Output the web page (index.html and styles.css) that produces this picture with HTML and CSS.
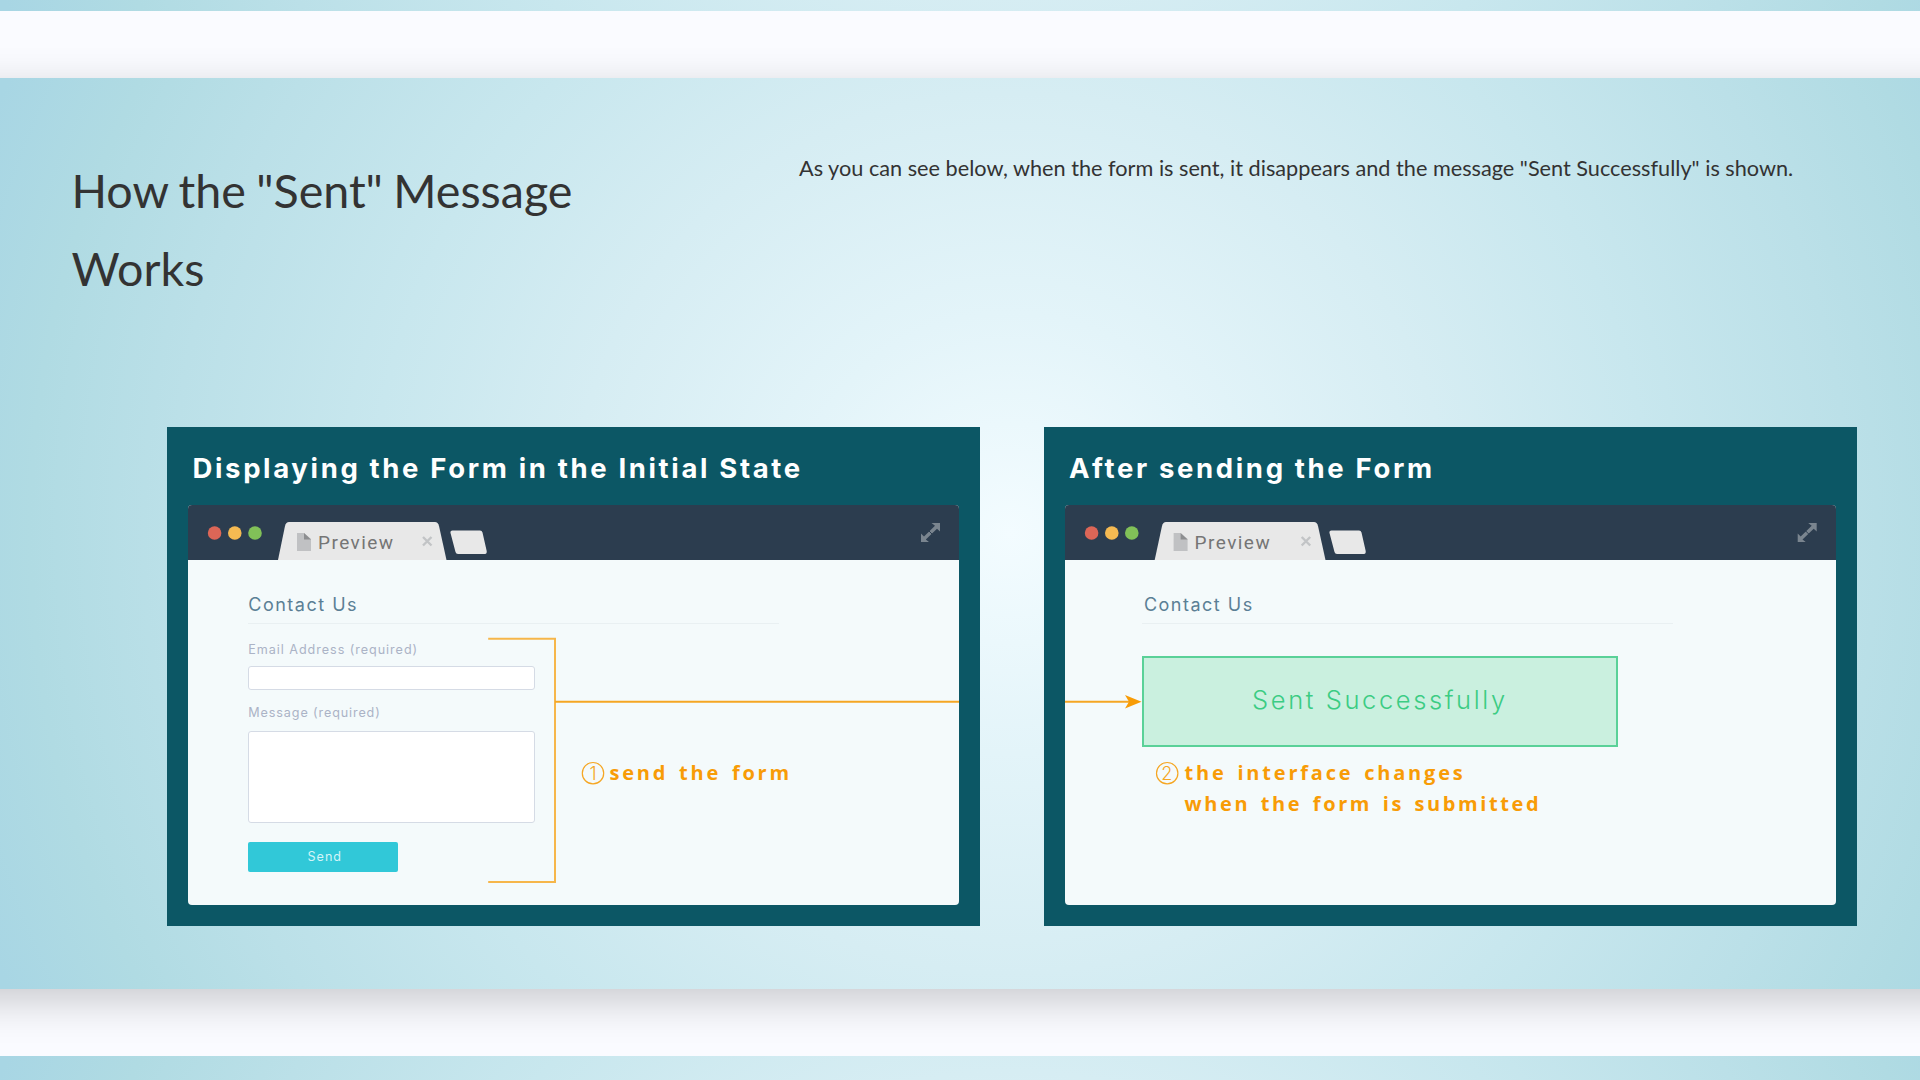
FILE: index.html
```html
<!DOCTYPE html>
<html lang="en">
<head>
<meta charset="utf-8">
<title>How the "Sent" Message Works</title>
<link rel="stylesheet" href="styles.css">
</head>
<body>
<div class="page">
  <div class="strip strip-top"></div>
  <section class="feature">
    <div class="intro">
      <h2>How the "Sent" Message<br>Works</h2>
      <p>As you can see below, when the form is sent, it disappears and the message "Sent Successfully" is shown.</p>
    </div>
    <div class="cards">
      <article class="card">
        <h3>Displaying the Form in the Initial State</h3>
        <div class="window">
          <header class="bar">
            <svg class="chrome" width="772" height="55" viewBox="0 0 772 55" aria-hidden="true">
              <circle cx="26.6" cy="28" r="6.8" fill="#dc6657"/><circle cx="46.8" cy="28" r="6.8" fill="#f5ba52"/><circle cx="67" cy="28" r="6.8" fill="#81c158"/>
              <path d="M90 55 97 21Q98 17 101 17H247Q250 17 251 21L258.500 55Z" fill="#e8e8e8"/>
              <path d="M264.500 25.500H292Q294 25.500 294.500 27.500L298.700 46Q299 49 297 49H270Q268 49 267.500 47L262.500 28Q262 25.500 264.500 25.500Z" fill="#e8e8e8"/>
              <path d="M109 28H116L123 34V46H109Z" fill="#c0c1c3"/><path d="M116 28 123 34.500H116Z" fill="#8d8e90"/>
              <path d="M235 32 243.500 40.500M243.500 32 235 40.500" stroke="#c2c4c6" stroke-width="2.400"/>
              <path d="M743.500 18H752V26.500L749 23.700 737.800 34.500 741 37H733V28.500L736 31.500 747 20.700Z" fill="#7a858f"/><path d="M740.500 25.500 744.500 29.500" stroke="#2c3d4f" stroke-width="1"/>
            </svg>
            <span class="tab-name">Preview</span>
          </header>
          <div class="body">
            <h4>Contact Us</h4>
            <div class="label">Email Address (required)</div>
            <div class="input"></div>
            <div class="label second">Message (required)</div>
            <div class="textarea"></div>
            <div class="send">Send</div>
            <svg class="wires" width="772" height="345" viewBox="0 0 772 345" aria-hidden="true">
              <path d="M300.200 78.800H367V322H300.200" fill="none" stroke="#f6b64a" stroke-width="2"/>
              <path d="M367 141.700H772" stroke="#f5a623" stroke-width="2"/>
              <circle cx="405" cy="213.200" r="10.700" fill="none" stroke="#f5a623" stroke-width="1.200"/>
            </svg>
            <div class="number n1">1</div>
            <div class="note note1">send the form</div>
          </div>
        </div>
      </article>
      <article class="card right">
        <h3>After sending the Form</h3>
        <div class="window">
          <header class="bar">
            <svg class="chrome" width="772" height="55" viewBox="0 0 772 55" aria-hidden="true">
              <circle cx="26.600" cy="28" r="6.800" fill="#dc6657"/><circle cx="46.800" cy="28" r="6.800" fill="#f5ba52"/><circle cx="66.800" cy="28" r="6.800" fill="#81c158"/>
              <path d="M89.700 55 97 21Q98 17 101 17H249Q252 17 253 21L260.500 55Z" fill="#e8e8e8"/>
              <path d="M266.500 25.500H294Q296 25.500 296.500 27.500L300.700 46Q301 49 299 49H272Q270 49 269.500 47L264.500 28Q264 25.500 266.500 25.500Z" fill="#e8e8e8"/>
              <path d="M108.600 28H115.600L122.600 34V46H108.600Z" fill="#c0c1c3"/><path d="M115.600 28 122.600 34.500H115.600Z" fill="#8d8e90"/>
              <path d="M236.700 32 245.200 40.500M245.200 32 236.700 40.500" stroke="#c2c4c6" stroke-width="2.400"/>
              <path d="M743.200 18H751.700V26.500L748.700 23.700 737.500 34.500 740.700 37H732.700V28.500L735.700 31.500 746.700 20.700Z" fill="#7a858f"/><path d="M740.200 25.500 744.200 29.500" stroke="#2c3d4f" stroke-width="1"/>
            </svg>
            <span class="tab-name">Preview</span>
          </header>
          <div class="body">
            <h4>Contact Us</h4>
            <div class="success">Sent Successfully</div>
            <svg class="wires" width="772" height="345" viewBox="0 0 772 345" aria-hidden="true">
              <path d="M0 141.700H64" stroke="#f5a623" stroke-width="2"/>
              <path d="M60 135 76.500 141.700 60 148.500 64 141.700Z" fill="#f89c06"/>
              <circle cx="102.200" cy="213.200" r="10.700" fill="none" stroke="#f5a623" stroke-width="1.200"/>
            </svg>
            <div class="number n2">2</div>
            <div class="note note2">the interface changes<br><span class="second-line">when the form is submitted</span></div>
          </div>
        </div>
      </article>
    </div>
  </section>
  <div class="strip strip-bottom"></div>
</div>
</body>
</html>
```
FILE: styles.css
```css
* { box-sizing: border-box; }
body {
  margin: 0;
  height: 1080px;
  overflow: hidden;
  background: #fafbff;
  font-family: Lato, "Liberation Sans", sans-serif;
  color: #333;
}
.page { display: flex; flex-direction: column; gap: 67px; height: 1080px; margin: 0 -60px; }
h2, h3, h4, p { margin: 0; font-weight: 400; }
.strip, .feature {
  flex: none;
  background: radial-gradient(circle at 1070px 455px, #f3fcff 0, #e3f4f9 220px, #d6edf3 440px, #c8e7ee 640px, #bbe0e8 840px, #b0dbe3 980px, #a8d6e4 1100px);
}
.strip-top { height: 11px; background-position: 0 -900px; background-size: 100% 911px; }
.strip-bottom { height: 24px; }
.feature {
  height: 911px;
  padding: 71px 123px 0 131.500px;
  box-shadow: 0 12px 40px rgba(0, 0, 0, .2);
}
.intro { display: flex; height: 278.400px; }
.intro h2 { width: 727.500px; padding-top: 1.500px; font-size: 46.600px; line-height: 78px; word-spacing: -1.500px; }
.intro p { font-size: 21.700px; line-height: 38px; white-space: nowrap; }
.cards { display: flex; gap: 63.600px; padding-left: 95.500px; }
.card {
  flex: none;
  width: 813px;
  height: 498.400px;
  padding: 19.700px 20.600px 0 21px;
  background: #0c5765;
}
.card h3 {
  height: 58.200px;
  padding-left: 4.500px;
  font: 700 27.500px/43px Inter, sans-serif;
  letter-spacing: 2.640px;
  color: #fff;
  white-space: nowrap;
}
.window { height: 399.400px; border-radius: 4px; overflow: hidden; background: #f4fafb; }
.bar { display: grid; height: 54.800px; background: #2c3d4f; }
.chrome, .tab-name { grid-area: 1 / 1; }
.tab-name {
  padding: 22.800px 0 0 130px;
  font: 400 19px/30px Roboto, sans-serif;
  letter-spacing: 1.450px;
  color: #757575;
}
.body { position: relative; height: 345px; padding: 30px 60.300px; font-family: Inter, sans-serif; }
.body h4 {
  width: 531px;
  height: 34.200px;
  border-bottom: 1.500px solid #e9f0f2;
  font-size: 18px;
  line-height: 30px;
  letter-spacing: 1.500px;
  color: #5b7f95;
}
.right .body { padding-left: 77.300px; }
.right h4 { padding-left: 2px; }
.label { margin-top: 15.600px; height: 20px; font-size: 12.600px; line-height: 20px; letter-spacing: .95px; color: #abb3c6; }
.input { margin-top: 6px; width: 287px; height: 24.500px; border: 1px solid #d5dbe5; border-radius: 3px; background: #fff; }
.label.second { margin-top: 12.600px; letter-spacing: .88px; }
.textarea { margin-top: 8.300px; width: 287px; height: 92px; border: 1px solid #d5dbe5; border-radius: 3px; background: #fff; }
.send {
  margin-top: 19px;
  padding-left: 3px;
  width: 150px;
  height: 29.500px;
  border-radius: 2px;
  background: #31c8d8;
  color: #d3f5f8;
  font-size: 12.600px;
  line-height: 29px;
  letter-spacing: 1px;
  text-align: center;
}
.success {
  margin-top: 32px;
  width: 476px;
  height: 90.400px;
  border: 2px solid #5ad198;
  background: #caf0df;
  color: #3bcc83;
  font-size: 25.500px;
  font-weight: 300;
  line-height: 84px;
  letter-spacing: 2.600px;
  text-align: center;
}
.wires { position: absolute; left: 0; top: 0; }
.number { position: absolute; top: 203px; width: 22px; font: 300 18px/22px Inter, sans-serif; color: #f5a623; text-align: center; }
.n1 { left: 394px; }
.n2 { left: 91.200px; }
.note { position: absolute; top: 196.600px; font: 700 20px/31px "Open Sans", sans-serif; letter-spacing: 2.800px; word-spacing: 2.800px; color: #f89c06; white-space: nowrap; }
.note1 { left: 421.500px; }
.note2 { left: 120px; }
.second-line { letter-spacing: 2.600px; }
```
